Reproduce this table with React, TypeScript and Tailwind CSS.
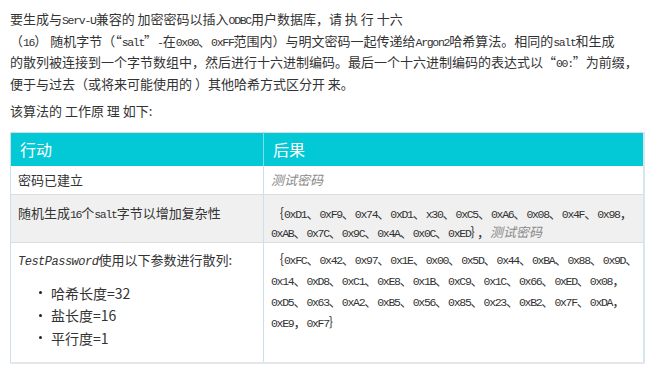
import React from 'react';

// ASCII runs get a narrow mono face, the rest stays on the CJK font
function Mixed({ text }: { text: string }) {
  const parts = text.split(/([!-~]+)/);
  return (
    <>
      {parts.map((p, i) =>
        /^[!-~]+$/.test(p) ? (
          <span key={i} className="font-['Liberation_Mono'] text-[11.5px] tracking-[-1.3px] leading-none">
            {p}
          </span>
        ) : (
          <span key={i}>{p}</span>
        )
      )}
    </>
  );
}

const intro = [
  '要生成与Serv-U兼容的 加密密码以插入ODBC用户数据库，请 执 行 十六',
  '（16） 随机字节（“salt”-在0x00、0xFF范围内）与明文密码一起传递给Argon2哈希算法。相同的salt和生成',
  '的散列被连接到一个字节数组中，然后进行十六进制编码。最后一个十六进制编码的表达式以“00:”为前缀，',
  '便于与过去（或将来可能使用的 ）其他哈希方式区分开 来。',
];

const hashLines = [
  '｛0xFC、0x42、0x97、0x1E、0x00、0x5D、0x44、0xBA、0x88、0x9D、',
  '0x14、0xD8、0xC1、0xE8、0x1B、0xC9、0x1C、0x66、0xED、0x08，',
  '0xD5、0x63、0xA2、0xB5、0x56、0x85、0x23、0xB2、0x7F、0xDA，',
  '0xE9，0xF7｝',
];

const params = ['哈希长度=32', '盐长度=16', '平行度=1'];

export default function App() {
  return (
    <div className="w-[655px] h-[374px] bg-white text-[#333] text-[13px] font-['Noto_Sans_CJK_SC',sans-serif] overflow-hidden">
      <div className="pl-[10px] pt-[8px] leading-[21.5px]">
        {intro.map((line) => (
          <div key={line} className="whitespace-nowrap">
            <Mixed text={line} />
          </div>
        ))}
        <div className="mt-[6px] whitespace-nowrap">该算法的 工作原 理 如下:</div>
      </div>

      <table className="ml-[10px] mt-[10px] w-[635px] border-collapse table-fixed">
        <thead>
          <tr className="bg-[#03c8d6] text-white text-[16px] leading-[20px]">
            <th className="w-[253px] h-[34px] px-[9px] text-left font-normal border-t border-[#dcdcdc] border-l border-l-[#c9e1ec] border-r border-r-[#7fdde6]">
              行动
            </th>
            <th className="h-[34px] px-[9px] text-left font-normal border-t border-[#dcdcdc] border-r-2 border-r-[#d4e6ee]">
              后果
            </th>
          </tr>
        </thead>
        <tbody className="leading-[20px]">
          <tr className="bg-white">
            <td className="h-[28px] px-[7px] border-l border-[#c9e1ec] border-r border-b border-b-[#dcdcdc]">
              密码已建立
            </td>
            <td className="h-[28px] px-[7px] italic text-[#8a8a8a] border-b border-[#dcdcdc] border-r-2 border-r-[#d4e6ee]">
              测试密码
            </td>
          </tr>
          <tr className="bg-[#f0f0f0]">
            <td className="h-[48px] px-[7px] pt-[8px] align-top border-l border-[#c9e1ec] border-r border-b border-b-[#dcdcdc]">
              <Mixed text="随机生成16个salt字节以增加复杂性" />
            </td>
            <td className="h-[48px] px-[7px] pt-[8px] align-top border-b border-[#dcdcdc] border-r-2 border-r-[#d4e6ee] leading-[19px]">
              <div className="whitespace-nowrap">
                <Mixed text="｛0xD1、0xF9、0x74、0xD1、x30、0xC5、0xA6、0x08、0x4F、0x98，" />
              </div>
              <div className="whitespace-nowrap">
                <Mixed text="0xAB、0x7C、0x9C、0x4A、0x0C、0xED｝，" />
                <span className="italic text-[#8a8a8a]">测试密码</span>
              </div>
            </td>
          </tr>
          <tr className="bg-white">
            <td className="h-[121px] px-[7px] pt-[7px] align-top border-l border-[#c9e1ec] border-r border-b-2 border-b-[#e6e6e6]">
              <div className="whitespace-nowrap">
                <span className="italic font-['Liberation_Mono'] text-[12px] tracking-[-0.5px] leading-none">TestPassword</span>
                使用以下参数进行散列:
              </div>
              <ul className="mt-[12px] pl-[21px] text-[14px] leading-[22.5px] font-['Noto_Sans_CJK_SC','Liberation_Sans',sans-serif]">
                {params.map((p) => (
                  <li key={p} className="flex items-center gap-[9px]">
                    <span className="w-[3px] h-[3px] rounded-full bg-[#222]" />
                    <span>{p}</span>
                  </li>
                ))}
              </ul>
            </td>
            <td className="h-[121px] px-[7px] pt-[5px] align-top leading-[21.3px] border-b-2 border-[#e6e6e6] border-r-2 border-r-[#d4e6ee]">
              {hashLines.map((line) => (
                <div key={line} className="whitespace-nowrap">
                  <Mixed text={line} />
                </div>
              ))}
            </td>
          </tr>
        </tbody>
      </table>
    </div>
  );
}
